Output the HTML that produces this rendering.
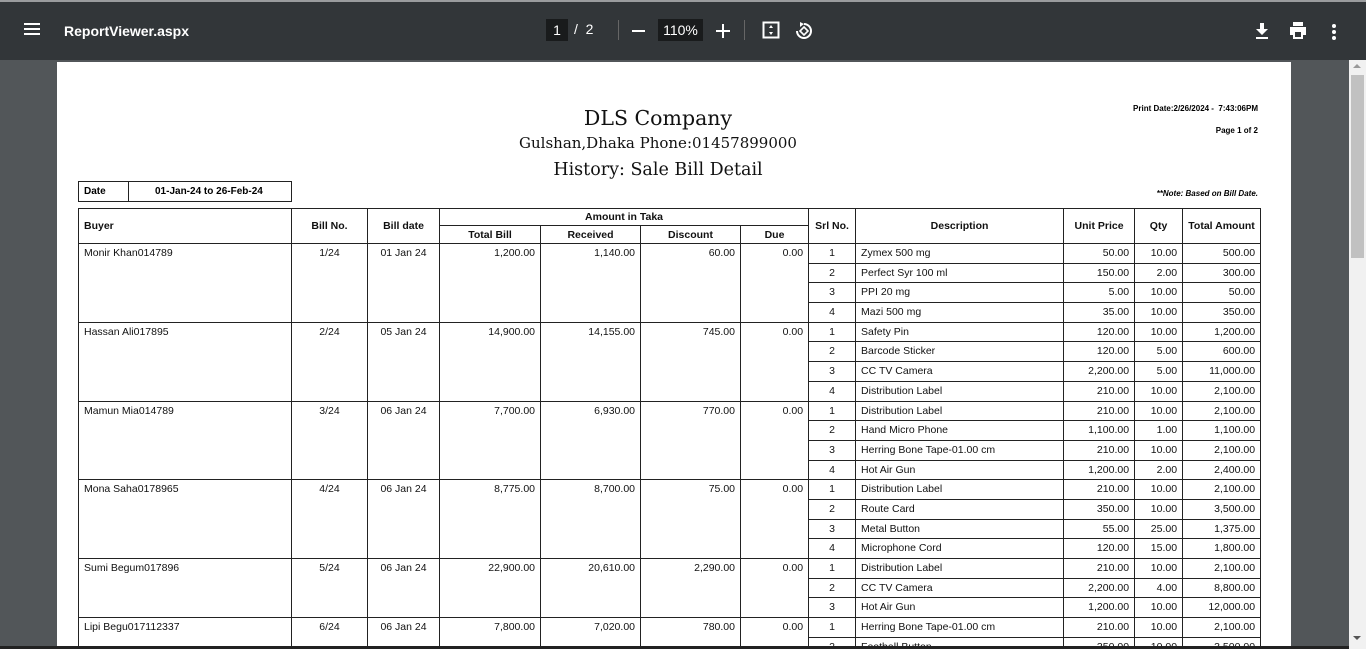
<!DOCTYPE html>
<html style="width:1366px;height:649px;overflow:hidden"><head><meta charset="utf-8"><style>
*{margin:0;padding:0;box-sizing:border-box}
body{width:1366px;height:649px;overflow:hidden;background:#525659;font-family:"Liberation Sans",Arial,sans-serif;position:relative}
.tb{position:absolute;left:0;top:0;width:1366px;height:60px;background:#323639;border-top:2px solid #9a9c9e;color:#f1f1f1}
.tb .t{position:absolute;left:64px;top:21px;font-size:14px;font-weight:bold;color:#fff}
.abs{position:absolute}
.page{position:absolute;left:57px;top:62px;width:1234px;height:584px;background:#fff}
.sb{position:absolute;left:1349px;top:60px;width:17px;height:586px;background:#f1f1f1}
.serif{font-family:"DejaVu Serif","Liberation Serif",serif;color:#111;position:absolute;text-align:center;width:400px;left:458px}
.clip{position:absolute;left:0;top:0;width:1366px;height:646px;overflow:hidden}
table{border-collapse:collapse;table-layout:fixed;position:absolute;left:78px;top:208px;width:1182px;font-size:10.5px;color:#111}
td,th{border:1px solid #222;padding:0 5px;white-space:nowrap;overflow:hidden}
th{font-weight:bold;text-align:center}
td{height:19.7px;vertical-align:top;padding-top:3px}
.r{text-align:right}.c{text-align:center}
</style></head><body>
<div class="clip">
<div class="tb">
<div class="abs" style="left:24px;top:21px;width:16px;height:2px;background:#fff;box-shadow:0 5px 0 #fff,0 10px 0 #fff"></div>
<div class="t">ReportViewer.aspx</div>
<div class="abs" style="left:546px;top:17px;width:22px;height:22px;background:#191b1c;color:#fff;font-size:14px;text-align:center;line-height:22px">1</div>
<div class="abs" style="left:574px;top:19px;font-size:14px;color:#fff">/&nbsp;&nbsp;2</div>
<div class="abs" style="left:618px;top:18px;width:1px;height:20px;background:#666"></div>
<div class="abs" style="left:632px;top:28px;width:13px;height:2px;background:#fff"></div>
<div class="abs" style="left:658px;top:17px;width:45px;height:22px;background:#191b1c;color:#fff;font-size:14px;text-align:center;line-height:22px">110%</div>
<div class="abs" style="left:716px;top:28px;width:14px;height:2px;background:#fff"></div>
<div class="abs" style="left:722px;top:22px;width:2px;height:14px;background:#fff"></div>
<div class="abs" style="left:744px;top:18px;width:1px;height:20px;background:#666"></div>
<svg class="abs" style="left:762px;top:19px" width="18" height="18" viewBox="0 0 18 18"><rect x="1.5" y="1.5" width="15" height="15" fill="none" stroke="#fff" stroke-width="2"/><path d="M9 4l-2 3h4zM9 14l-2-3h4z" fill="#fff"/></svg>
<svg class="abs" style="left:794px;top:19px" width="20" height="20" viewBox="0 0 20 20"><path d="M10 3a7 7 0 1 1-7 7" fill="none" stroke="#fff" stroke-width="2"/><path d="M10 6l4 4-4 4-4-4z" fill="none" stroke="#fff" stroke-width="1.6"/><path d="M6 1l4 2-4 3z" fill="#fff"/></svg>
<svg class="abs" style="left:1255px;top:21px" width="14" height="16" viewBox="0 0 14 16"><path d="M5 0h4v6h4L7 12 1 6h4z M1 14h12v2H1z" fill="#fff"/></svg>
<svg class="abs" style="left:1289px;top:20px" width="18" height="17" viewBox="0 0 18 17"><path d="M4 0h10v4H4z M1 5h16v8h-3v4H4v-4H1z" fill="#fff"/><rect x="6" y="10" width="6" height="5" fill="#323639"/></svg>
<div class="abs" style="left:1332px;top:22px;width:4px;height:4px;border-radius:2px;background:#fff;box-shadow:0 6px 0 #fff,0 12px 0 #fff"></div>
</div>
<div class="page"></div>
<div class="sb"><div class="abs" style="left:2px;top:15px;width:13px;height:183px;background:#c1c1c1"></div><div class="abs" style="left:4px;top:4px;border:4px solid transparent;border-bottom-color:#999;border-top:0"></div><div class="abs" style="left:4px;top:576px;border:4px solid transparent;border-top-color:#555;border-bottom:0"></div></div>

<div class="serif" style="top:106px;font-size:20.5px">DLS Company</div>
<div class="serif" style="top:134px;font-size:15px">Gulshan,Dhaka Phone:01457899000</div>
<div class="serif" style="top:160px;font-size:17.5px">History: Sale Bill Detail</div>
<div class="abs" style="left:1080px;top:104px;width:178px;text-align:right;font-size:8px;font-weight:bold">Print Date:2/26/2024 -&nbsp; 7:43:06PM</div>
<div class="abs" style="left:1100px;top:126px;width:158px;text-align:right;font-size:8px;font-weight:bold">Page 1 of 2</div>
<div class="abs" style="left:1060px;top:189px;width:198px;text-align:right;font-size:8px;font-weight:bold;font-style:italic">**Note: Based on Bill Date.</div>
<div class="abs" style="left:78px;top:181px;width:214px;height:21px;border:1px solid #222;font-size:10px;font-weight:bold">
<div class="abs" style="left:49px;top:0;width:1px;height:19px;background:#222"></div>
<span class="abs" style="left:5px;top:4px">Date</span><span class="abs" style="left:76px;top:4px">01-Jan-24 to 26-Feb-24</span></div>

<table>
<colgroup><col style="width:213px"><col style="width:76px"><col style="width:72px"><col style="width:101px"><col style="width:100px"><col style="width:100px"><col style="width:68px"><col style="width:47px"><col style="width:208px"><col style="width:71px"><col style="width:48px"><col style="width:78px"></colgroup>
<tr style="height:17px"><th rowspan="2" style="text-align:left">Buyer</th><th rowspan="2">Bill No.</th><th rowspan="2">Bill date</th><th colspan="4">Amount in Taka</th><th rowspan="2">Srl No.</th><th rowspan="2">Description</th><th rowspan="2">Unit Price</th><th rowspan="2">Qty</th><th rowspan="2">Total Amount</th></tr>
<tr style="height:18px"><th>Total Bill</th><th>Received</th><th>Discount</th><th>Due</th></tr>

<tr><td rowspan="4">Monir Khan014789</td><td rowspan="4" class="c">1/24</td><td rowspan="4" class="c">01 Jan 24</td><td rowspan="4" class="r">1,200.00</td><td rowspan="4" class="r">1,140.00</td><td rowspan="4" class="r">60.00</td><td rowspan="4" class="r">0.00</td><td class="c">1</td><td>Zymex 500 mg</td><td class="r">50.00</td><td class="r">10.00</td><td class="r">500.00</td></tr>
<tr><td class="c">2</td><td>Perfect Syr 100 ml</td><td class="r">150.00</td><td class="r">2.00</td><td class="r">300.00</td></tr>
<tr><td class="c">3</td><td>PPI 20 mg</td><td class="r">5.00</td><td class="r">10.00</td><td class="r">50.00</td></tr>
<tr><td class="c">4</td><td>Mazi 500 mg</td><td class="r">35.00</td><td class="r">10.00</td><td class="r">350.00</td></tr>

<tr><td rowspan="4">Hassan Ali017895</td><td rowspan="4" class="c">2/24</td><td rowspan="4" class="c">05 Jan 24</td><td rowspan="4" class="r">14,900.00</td><td rowspan="4" class="r">14,155.00</td><td rowspan="4" class="r">745.00</td><td rowspan="4" class="r">0.00</td><td class="c">1</td><td>Safety Pin</td><td class="r">120.00</td><td class="r">10.00</td><td class="r">1,200.00</td></tr>
<tr><td class="c">2</td><td>Barcode Sticker</td><td class="r">120.00</td><td class="r">5.00</td><td class="r">600.00</td></tr>
<tr><td class="c">3</td><td>CC TV Camera</td><td class="r">2,200.00</td><td class="r">5.00</td><td class="r">11,000.00</td></tr>
<tr><td class="c">4</td><td>Distribution Label</td><td class="r">210.00</td><td class="r">10.00</td><td class="r">2,100.00</td></tr>

<tr><td rowspan="4">Mamun Mia014789</td><td rowspan="4" class="c">3/24</td><td rowspan="4" class="c">06 Jan 24</td><td rowspan="4" class="r">7,700.00</td><td rowspan="4" class="r">6,930.00</td><td rowspan="4" class="r">770.00</td><td rowspan="4" class="r">0.00</td><td class="c">1</td><td>Distribution Label</td><td class="r">210.00</td><td class="r">10.00</td><td class="r">2,100.00</td></tr>
<tr><td class="c">2</td><td>Hand Micro Phone</td><td class="r">1,100.00</td><td class="r">1.00</td><td class="r">1,100.00</td></tr>
<tr><td class="c">3</td><td>Herring Bone Tape-01.00 cm</td><td class="r">210.00</td><td class="r">10.00</td><td class="r">2,100.00</td></tr>
<tr><td class="c">4</td><td>Hot Air Gun</td><td class="r">1,200.00</td><td class="r">2.00</td><td class="r">2,400.00</td></tr>

<tr><td rowspan="4">Mona Saha0178965</td><td rowspan="4" class="c">4/24</td><td rowspan="4" class="c">06 Jan 24</td><td rowspan="4" class="r">8,775.00</td><td rowspan="4" class="r">8,700.00</td><td rowspan="4" class="r">75.00</td><td rowspan="4" class="r">0.00</td><td class="c">1</td><td>Distribution Label</td><td class="r">210.00</td><td class="r">10.00</td><td class="r">2,100.00</td></tr>
<tr><td class="c">2</td><td>Route Card</td><td class="r">350.00</td><td class="r">10.00</td><td class="r">3,500.00</td></tr>
<tr><td class="c">3</td><td>Metal Button</td><td class="r">55.00</td><td class="r">25.00</td><td class="r">1,375.00</td></tr>
<tr><td class="c">4</td><td>Microphone Cord</td><td class="r">120.00</td><td class="r">15.00</td><td class="r">1,800.00</td></tr>

<tr><td rowspan="3">Sumi Begum017896</td><td rowspan="3" class="c">5/24</td><td rowspan="3" class="c">06 Jan 24</td><td rowspan="3" class="r">22,900.00</td><td rowspan="3" class="r">20,610.00</td><td rowspan="3" class="r">2,290.00</td><td rowspan="3" class="r">0.00</td><td class="c">1</td><td>Distribution Label</td><td class="r">210.00</td><td class="r">10.00</td><td class="r">2,100.00</td></tr>
<tr><td class="c">2</td><td>CC TV Camera</td><td class="r">2,200.00</td><td class="r">4.00</td><td class="r">8,800.00</td></tr>
<tr><td class="c">3</td><td>Hot Air Gun</td><td class="r">1,200.00</td><td class="r">10.00</td><td class="r">12,000.00</td></tr>

<tr><td rowspan="2">Lipi Begu017112337</td><td rowspan="2" class="c">6/24</td><td rowspan="2" class="c">06 Jan 24</td><td rowspan="2" class="r">7,800.00</td><td rowspan="2" class="r">7,020.00</td><td rowspan="2" class="r">780.00</td><td rowspan="2" class="r">0.00</td><td class="c">1</td><td>Herring Bone Tape-01.00 cm</td><td class="r">210.00</td><td class="r">10.00</td><td class="r">2,100.00</td></tr>
<tr><td class="c">2</td><td>Football Button</td><td class="r">350.00</td><td class="r">10.00</td><td class="r">3,500.00</td></tr>
</table>
</div>
<div class="abs" style="left:0;top:646px;width:1349px;height:3px;background:#222"></div>
<div class="abs" style="left:1349px;top:646px;width:17px;height:3px;background:#f1f1f1"></div>
</body></html>
